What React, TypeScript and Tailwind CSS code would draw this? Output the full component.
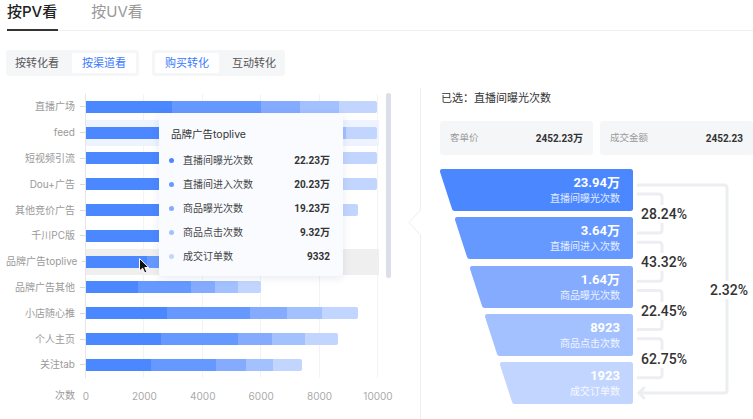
const COLORS = ['#4b87ff', '#6699ff', '#85abff', '#a3c0ff', '#c2d5ff']

const rows = [
  { name: '直播广场', segs: [86, 89, 39, 39, 38] },
  { name: 'feed', segs: [90, 85, 45, 40, 31], band: 'bg-[#edf3ff]' },
  { name: '短视频引流', segs: [80, 90, 45, 40, 36] },
  { name: 'Dou+广告', segs: [85, 80, 50, 40, 36] },
  { name: '其他竞价广告', segs: [85, 75, 45, 35, 32] },
  { name: '千川PC版', segs: [80, 60, 40, 30, 30] },
  { name: '品牌广告toplive', segs: [61, 60, 40, 40, 40], band: 'bg-[#efefef]' },
  { name: '品牌广告其他', segs: [52, 53, 24, 23, 23] },
  { name: '小店随心推', segs: [81, 83, 37, 35, 36] },
  { name: '个人主页', segs: [75, 77, 34, 33, 33] },
  { name: '关注tab', segs: [65, 65, 30, 27, 29] },
]

const tipRows = [
  { label: '直播间曝光次数', value: '22.23万' },
  { label: '直播间进入次数', value: '20.23万' },
  { label: '商品曝光次数', value: '19.23万' },
  { label: '商品点击次数', value: '9.32万' },
  { label: '成交订单数', value: '9332' },
]

const steps = [
  { value: '23.94万', label: '直播间曝光次数' },
  { value: '3.64万', label: '直播间进入次数' },
  { value: '1.64万', label: '商品曝光次数' },
  { value: '8923', label: '商品点击次数' },
  { value: '1923', label: '成交订单数' },
]

const rates = ['28.24%', '43.32%', '22.45%', '62.75%']

const ticks = [
  { v: '0', cls: 'left-[0%]' },
  { v: '2000', cls: 'left-[20%]' },
  { v: '4000', cls: 'left-[40%]' },
  { v: '6000', cls: 'left-[60%]' },
  { v: '8000', cls: 'left-[80%]' },
  { v: '10000', cls: 'left-[100%]' },
]

const num = "font-['Roboto','Noto_Sans_CJK_SC',sans-serif]"

function BarChart() {
  return (
    <div className="w-[414px] pt-[6px]">
      <div className="flex">
        <div className="w-[79px] flex flex-col">
          {rows.map((r) => (
            <div key={r.name} className="h-[25.8px] flex items-center justify-end gap-[5px] text-[10px] text-[#9a9a9a]">
              <span className="whitespace-nowrap">{r.name}</span>
              <span className="w-[5px] h-px bg-[#d9d9d9]" />
            </div>
          ))}
        </div>
        <div className="relative w-[294px] border-l border-[#e6e6e6]">
          <div className="absolute left-0 top-0 bottom-0 w-[292px] grid grid-cols-5">
            <div className="border-r border-[#f3f3f3]" />
            <div className="border-r border-[#f3f3f3]" />
            <div className="border-r border-[#f3f3f3]" />
            <div className="border-r border-[#f3f3f3]" />
            <div className="border-r border-[#f3f3f3]" />
          </div>
          {rows.map((r) => (
            <div key={r.name} className={`relative h-[25.8px] flex items-center ${r.band ?? ''}`}>
              <div className="flex h-[12px]">
                {r.segs.map((w, i) => (
                  <div key={i} className={i === 4 ? 'rounded-r-[2px]' : ''} style={{ width: w, background: COLORS[i] }} />
                ))}
              </div>
            </div>
          ))}

          <div className="absolute left-[73px] top-[19px] w-[184px] h-[163px] rounded-[3px] bg-[#f9fbff] shadow-[0_2px_8px_rgba(30,50,100,0.10)]">
            <div className="pl-[12px] pt-[14px] leading-[16px] text-[10.5px] text-[#333]">品牌广告toplive</div>
            <div className="mt-[5px] flex flex-col">
              {tipRows.map((t, i) => (
                <div key={t.label} className="h-[24px] flex items-center pl-[10px] pr-[13px]">
                  <span className="w-[5px] h-[5px] rounded-full" style={{ background: COLORS[i] }} />
                  <span className="ml-[9px] text-[10px] text-[#444]">{t.label}</span>
                  <span className={`ml-auto text-[10px] font-bold text-[#333] ${num}`}>{t.value}</span>
                </div>
              ))}
            </div>
          </div>

          <svg className="absolute left-[53px] top-[164px]" width="11" height="16" viewBox="0 0 11 16">
            <path d="M0.5 0.5 L0.5 13 L3.6 10.2 L5.8 15 L7.9 14.1 L5.8 9.5 L9.8 9.5 Z" fill="#111" stroke="#fff" strokeWidth="1" />
          </svg>
        </div>
        <div className="ml-[7px] -mt-px w-[5px] h-[185px] rounded-full bg-[#dcdfe8]" />
      </div>
      <div className="mt-[10px] flex h-[16px] items-center">
        <div className="w-[80px] pr-[11px] text-right text-[10px] text-[#9a9a9a]">次数</div>
        <div className="relative w-[292px] h-[16px]">
          {ticks.map((t) => (
            <span key={t.v} className={`absolute top-0 leading-[16px] -translate-x-1/2 text-[10px] text-[#aaa] ${t.cls}`}>
              {t.v}
            </span>
          ))}
        </div>
      </div>
    </div>
  )
}

function Funnel() {
  return (
    <div className="mt-[14px] flex">
      <div className="w-[193px] flex flex-col gap-[6.25px]">
        {steps.map((s, i) => (
          <div key={s.label} className="relative h-[42px]">
            <svg className="absolute inset-0" width="193" height="42">
              <polygon
                points={`${15 * i + 2.5},2.5 190.5,2.5 190.5,39.5 ${15 * i + 14.5},39.5`}
                fill={COLORS[i]}
                stroke={COLORS[i]}
                strokeWidth="5"
                strokeLinejoin="round"
              />
            </svg>
            <div className="relative flex flex-col items-end pt-[6px] pr-[13px] text-white">
              <span className={`leading-[16px] text-[13px] font-bold ${num}`}>{s.value}</span>
              <span className="leading-[14px] text-[10px] text-white/85">{s.label}</span>
            </div>
          </div>
        ))}
      </div>
      <div className="relative flex-1 h-[241px]">
        <svg className="absolute inset-0" width="120" height="241" fill="none" stroke="#eceef2" strokeWidth="3" strokeLinecap="round" strokeLinejoin="round">
          {rates.map((_, k) => {
            const t = 25 + 48.25 * k
            const b = 64 + 48.25 * k
            return <path key={k} d={`M5 ${t} H26 Q29 ${t} 29 ${t + 3} V${b - 3} Q29 ${b} 26 ${b} H5`} />
          })}
          <path d="M5 16 H91 Q94 16 94 19 V221 Q94 224 91 224 H6" />
          <path d="M11 219 L6 224 L11 229" />
        </svg>
        {rates.map((r, k) => (
          <span
            key={r}
            className={`absolute left-[8px] bg-white leading-[18px] text-[14px] font-medium text-[#333] ${num}`}
            style={{ top: 36 + 48.25 * k }}
          >
            {r}
          </span>
        ))}
        <span className={`absolute left-[77px] top-[112px] bg-white leading-[18px] text-[14px] font-medium text-[#333] ${num}`}>2.32%</span>
      </div>
    </div>
  )
}

export default function App() {
  return (
    <div className="w-[753px] h-[419px] overflow-hidden bg-white pl-[6px] font-['Inter','Noto_Sans_CJK_SC',sans-serif]">
      <div className="h-[31px] flex gap-[34px] pl-[1px] border-b border-[#f0f0f0]">
        <div className="relative pt-[3px] leading-[18px] text-[15px] font-medium text-[#222]">
          按PV看
          <span className="absolute left-0 right-[-1px] bottom-[-1px] h-[2px] bg-[#333]" />
        </div>
        <div className="pt-[3px] leading-[18px] text-[15px] text-[#999]">按UV看</div>
      </div>

      <div className="mt-[19px] flex gap-[13px]">
        <div className="flex gap-[7px] p-[3px] rounded-[3px] bg-[#f5f6f8] text-[11px] leading-[20px]">
          <span className="px-[6px] text-[#555]">按转化看</span>
          <span className="px-[10px] rounded-[2px] bg-white text-[#3a7afe]">按渠道看</span>
        </div>
        <div className="flex gap-[7px] p-[3px] rounded-[3px] bg-[#f5f6f8] text-[11px] leading-[20px]">
          <span className="px-[10px] rounded-[2px] bg-white text-[#3a7afe]">购买转化</span>
          <span className="px-[6px] text-[#555]">互动转化</span>
        </div>
      </div>

      <div className="mt-[12px] flex">
        <BarChart />
        <div className="relative w-[333px] h-[331px] border-l border-[#eeeeee] pl-[19px] pt-[2px]">
          <svg className="absolute left-[-13px] top-[122px]" width="14" height="26">
            <rect x="11.5" y="0.5" width="2.5" height="24" fill="#fff" />
            <path d="M12.5 0 L1 12.5 L12.5 25" fill="#fff" stroke="#eeeeee" strokeWidth="1" />
          </svg>
          <div className="pl-[1px] leading-[16px] text-[11px] text-[#333]">已选：直播间曝光次数</div>
          <div className="mt-[15px] grid grid-cols-2 gap-[7px] w-[313px]">
            <div className="h-[34px] flex items-center justify-between px-[10px] rounded-[3px] bg-[#f5f6f8]">
              <span className="text-[9.5px] text-[#999]">客单价</span>
              <span className={`text-[10px] font-bold text-[#333] ${num}`}>2452.23万</span>
            </div>
            <div className="h-[34px] flex items-center justify-between px-[10px] rounded-[3px] bg-[#f5f6f8]">
              <span className="text-[9.5px] text-[#999]">成交金额</span>
              <span className={`text-[10px] font-bold text-[#333] ${num}`}>2452.23</span>
            </div>
          </div>
          <Funnel />
        </div>
      </div>
    </div>
  )
}
